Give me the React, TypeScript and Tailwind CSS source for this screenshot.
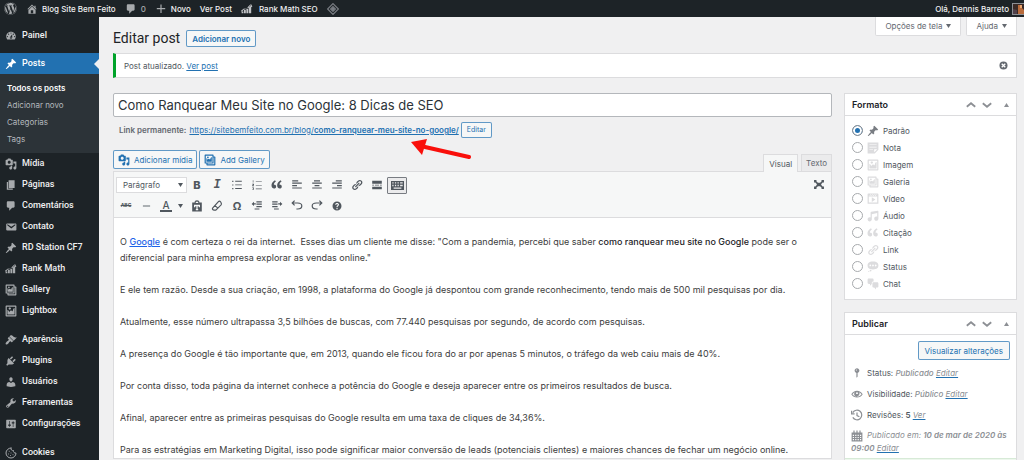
import type { ReactNode } from 'react';
import { FaWordpress } from 'react-icons/fa';
import { Cookie } from 'lucide-react';

const paths = {
  dashboard: 'M3.76 16h12.48c1.1-1.37 1.76-3.11 1.76-5 0-4.42-3.58-8-8-8s-8 3.58-8 8c0 1.89.66 3.63 1.76 5zM10 4c.55 0 1 .45 1 1s-.45 1-1 1-1-.45-1-1 .45-1 1-1zM6 6c.55 0 1 .45 1 1s-.45 1-1 1-1-.45-1-1 .45-1 1-1zm8 0c.55 0 1 .45 1 1s-.45 1-1 1-1-.45-1-1 .45-1 1-1zm-5.37 5.55L12 7v6c0 1.1-.9 2-2 2s-2-.9-2-2c0-.57.24-1.08.63-1.45zM4 10c.55 0 1 .45 1 1s-.45 1-1 1-1-.45-1-1 .45-1 1-1zm12 0c.55 0 1 .45 1 1s-.45 1-1 1-1-.45-1-1 .45-1 1-1zm-5 3c0-.55-.45-1-1-1s-1 .45-1 1 .45 1 1 1 1-.45 1-1z',
  post: 'M10.44 3.02l1.82-1.82 6.36 6.35-1.83 1.82c-1.05-.68-2.48-.57-3.41.36l-.75.75c-.92.93-1.04 2.35-.35 3.41l-1.83 1.82-2.41-2.41-2.8 2.79c-.42.42-3.38 2.71-3.8 2.29s1.86-3.39 2.28-3.81l2.79-2.79L4.1 9.36l1.83-1.82c1.05.69 2.48.57 3.4-.36l.75-.75c.93-.92 1.05-2.35.36-3.41z',
  media: 'M13 11V4c0-.55-.45-1-1-1h-1.67L9 1H5L3.67 3H2c-.55 0-1 .45-1 1v7c0 .55.45 1 1 1h10c.55 0 1-.45 1-1zM7 4.5c1.38 0 2.5 1.12 2.5 2.5S8.38 9.5 7 9.5 4.5 8.38 4.5 7 5.62 4.5 7 4.5zM14 6h5v10.5c0 1.38-1.12 2.5-2.5 2.5S14 17.88 14 16.5s1.12-2.5 2.5-2.5c.17 0 .34.02.5.05V9h-3V6zm-4 8.05V13h2v3.5c0 1.38-1.12 2.5-2.5 2.5S7 17.88 7 16.5 8.12 14 9.5 14c.17 0 .34.02.5.05z',
  page: 'M6 15V2h10v13H6zm-1 1h8v2H3V5h2v11z',
  comments: 'M5 2h9c1.1 0 2 .9 2 2v7c0 1.1-.9 2-2 2h-2l-5 5v-5H5c-1.1 0-2-.9-2-2V4c0-1.1.9-2 2-2z',
  email: 'M3.87 4h13.25C18.37 4 19 4.59 19 5.79v8.42c0 1.19-.63 1.79-1.88 1.79H3.87c-1.25 0-1.88-.6-1.88-1.79V5.79c0-1.2.63-1.79 1.88-1.79zm6.62 8.6l6.74-5.53c.24-.2.43-.66.13-1.07-.29-.41-.82-.42-1.17-.17l-5.7 3.86L4.8 5.83c-.35-.25-.88-.24-1.17.17-.3.41-.11.87.13 1.07z',
  rank: 'M1 14h3v3H1zM5 11l3-2v8H5zM9 9l3-2v10H9zM13 7l3-3 1-2 2 4-2 1v10h-4zM0 13L5 9l3 1 8-8 1 2-9 8-3-1-4 4z',
  appearance: 'M14.48 11.06L7.41 3.99l1.5-1.5c.5-.56 2.3-.47 3.51.32 1.21.8 1.43 1.28 2.91 2.1 1.18.64 2.45 1.26 4.45.85zm-.71.71L6.7 4.7 4.93 6.47c-.39.39-.39 1.02 0 1.41l1.06 1.06c.39.39.39 1.03 0 1.42-.6.6-1.43 1.11-2.21 1.69-.35.26-.7.53-1.01.84C1.43 14.23.4 16.08 1.4 17.07c.99 1 2.84-.03 4.18-1.36.31-.31.58-.66.85-1.02.57-.78 1.08-1.61 1.69-2.21.39-.39 1.02-.39 1.41 0l1.06 1.06c.39.39 1.02.39 1.41 0z',
  plugins: 'M13.11 4.36L9.87 7.6 8 5.73l3.24-3.24c.35-.34 1.05-.2 1.56.32.52.51.66 1.21.31 1.55zm-8 1.77l.91-1.12 9.01 9.01-1.19.84c-.71.71-2.63 1.16-3.82 1.16H6.14L4.9 17.26c-.59.59-1.54.59-2.12 0-.59-.58-.59-1.53 0-2.12l1.24-1.24v-3.88c0-1.13.4-3.19 1.09-3.89zm7.26 3.97l3.24-3.24c.34-.35 1.04-.21 1.55.31.52.51.66 1.21.31 1.55l-3.24 3.25z',
  users: 'M10 9.25c-2.27 0-2.73-3.44-2.73-3.44C7 4.02 7.82 2 9.97 2c2.16 0 2.98 2.02 2.71 3.81 0 0-.41 3.44-2.68 3.44zm0 2.57L12.72 10c2.39 0 4.52 2.33 4.52 4.53v2.49s-3.65 1.13-7.24 1.13c-3.65 0-7.24-1.13-7.24-1.13v-2.49c0-2.25 1.94-4.48 4.47-4.48z',
  tools: 'M16.68 9.77c-1.34 1.34-3.3 1.67-4.95.99l-5.41 6.52c-.99.99-2.59.99-3.58 0s-.99-2.59 0-3.57l6.52-5.42c-.68-1.65-.35-3.61.99-4.95 1.28-1.28 3.12-1.62 4.72-1.06l-2.89 2.89 2.82 2.82 2.86-2.87c.53 1.58.18 3.39-1.08 4.65zM3.81 16.21c.4.39 1.04.39 1.43 0 .4-.4.4-1.04 0-1.43-.39-.4-1.03-.4-1.43 0-.39.39-.39 1.03 0 1.43z',
  settings: 'M18 16V4c0-.55-.45-1-1-1H3c-.55 0-1 .45-1 1v12c0 .55.45 1 1 1h14c.55 0 1-.45 1-1zM8 11h1c.55 0 1 .45 1 1s-.45 1-1 1H8v1.5c0 .28-.22.5-.5.5s-.5-.22-.5-.5V13H6c-.55 0-1-.45-1-1s.45-1 1-1h1V5.5c0-.28.22-.5.5-.5s.5.22.5.5V11zm5-2h-1c-.55 0-1-.45-1-1s.45-1 1-1h1V5.5c0-.28.22-.5.5-.5s.5.22.5.5V7h1c.55 0 1 .45 1 1s-.45 1-1 1h-1v5.5c0 .28-.22.5-.5.5s-.5-.22-.5-.5V9z',
  home: 'M16 8.5l1.53 1.53-1.06 1.06L10 4.6l-6.47 6.49-1.06-1.06L10 2.5l4 4v-2h2v4zm-6-2.46l6 5.99V18H4v-5.97zM12 17v-5H8v5h4z',
  plus: 'M17 8.5v2h-6v6H9v-6H3v-2h6v-6h2v6z',
  image: 'M2.25 1h15.5c.69 0 1.25.56 1.25 1.25v15.5c0 .69-.56 1.25-1.25 1.25H2.25C1.56 19 1 18.44 1 17.75V2.25C1 1.56 1.56 1 2.25 1zM17 17V3H3v14h14zM10 6c0-1.1-.9-2-2-2s-2 .9-2 2 .9 2 2 2 2-.9 2-2zm3 5s0-6 3-6v10c0 .55-.45 1-1 1H5c-.55 0-1-.45-1-1V8c2 0 3 4 3 4s1-3 3-3 3 2 3 2z',
  gallery: 'M16 4h1.96c.57 0 1.04.47 1.04 1.04v12.92c0 .57-.47 1.04-1.04 1.04H5.04C4.47 19 4 18.53 4 17.96V16H2.04C1.47 16 1 15.53 1 14.96V2.04C1 1.47 1.47 1 2.04 1h12.92c.57 0 1.04.47 1.04 1.04V4zM3 14h11V3H3v11zm5-8.5C8 4.67 7.33 4 6.5 4S5 4.67 5 5.5 5.67 7 6.5 7 8 6.33 8 5.5zm2 4.5s1-5 3-5v8H4V7c2 0 2 3 2 3s.33-2 2-2 2 2 2 2zm7 7V6h-1v8.96c0 .57-.47 1.04-1.04 1.04H6v1h11z',
  aside: 'M1 1h18v12l-6 6H1V1zm3 3v1h12V4H4zm0 4v1h12V8H4zm6 5v-1H4v1h6zm2 4l5-5h-5v5z',
  video: 'M2 1h16c.55 0 1 .45 1 1v16l-18-.02V2c0-.55.45-1 1-1zm4 1L4 5h1l2-3H6zm4 0H9L7 5h1zm3 0h-1l-2 3h1zm3 0h-1l-2 3h1zm1 14V6H3v10h14zM8 7l6 4-6 4V7z',
  audio: 'M6.99 3.08l11.02-2c.55-.08.99.45.99 1V14.5c0 1.94-1.57 3.5-3.5 3.5S12 16.44 12 14.5c0-1.93 1.57-3.5 3.5-3.5.54 0 1.04.14 1.5.35V5.08l-9 2V16c-.24 1.7-1.74 3-3.5 3C2.57 19 1 17.44 1 15.5 1 13.57 2.57 12 4.5 12c.54 0 1.04.14 1.5.35V4.08c0-.55.44-.91.99-1z',
  quote: 'M8.54 12.74c0-.87-.24-1.61-.72-2.22-.73-.92-2.14-1.03-2.96-.85-.34-1.93 1.3-4.39 3.42-5.45L6.65 1.94C3.45 3.46.31 6.96.85 11.37 1.19 14.16 2.8 16 5.08 16c1 0 1.83-.29 2.48-.88.66-.59.98-1.38.98-2.38zm9.43 0c0-.87-.24-1.61-.72-2.22-.73-.92-2.14-1.03-2.96-.85-.34-1.93 1.3-4.39 3.42-5.45l-1.63-2.28c-3.2 1.52-6.34 5.02-5.8 9.43.34 2.79 1.95 4.63 4.23 4.63 1 0 1.83-.29 2.48-.88.66-.59.98-1.38.98-2.38z',
  link: 'M17.74 2.76c1.68 1.69 1.68 4.41 0 6.1l-1.53 1.52c-1.12 1.12-2.7 1.47-4.14 1.09l2.62-2.61.76-.77.76-.76c.84-.84.84-2.2 0-3.04-.84-.85-2.2-.85-3.04 0l-.77.76-3.38 3.38c-.37-1.44-.02-3.02 1.1-4.14l1.52-1.53c1.69-1.68 4.42-1.68 6.1 0zM8.59 13.43l5.34-5.34c.42-.42.42-1.1 0-1.52-.44-.43-1.13-.39-1.53 0l-5.33 5.34c-.42.42-.42 1.1 0 1.52.44.43 1.13.39 1.52 0zm-.76 2.29l4.14-4.15c.38 1.44.03 3.02-1.09 4.14l-1.52 1.53c-1.69 1.68-4.41 1.68-6.1 0-1.68-1.68-1.68-4.42 0-6.1l1.53-1.52c1.12-1.12 2.7-1.47 4.14-1.1l-4.14 4.15c-.85.84-.85 2.2 0 3.05.84.84 2.2.84 3.04 0z',
  status: 'M10 1c7 0 9 2.91 9 6.5S17 14 10 14s-9-2.91-9-6.5S3 1 10 1zM5.5 9C6.33 9 7 8.33 7 7.5S6.33 6 5.5 6 4 6.67 4 7.5 4.67 9 5.5 9zM10 9c.83 0 1.5-.67 1.5-1.5S10.83 6 10 6s-1.5.67-1.5 1.5S9.17 9 10 9zm4.5 0c.83 0 1.5-.67 1.5-1.5S15.33 6 14.5 6 13 6.67 13 7.5 13.67 9 14.5 9zM6 14.5c.83 0 1.5.67 1.5 1.5s-.67 1.5-1.5 1.5-1.5-.67-1.5-1.5.67-1.5 1.5-1.5zm-3 2c.55 0 1 .45 1 1s-.45 1-1 1-1-.45-1-1 .45-1 1-1z',
  chat: 'M11 6h-.82C9.07 6 8 7.2 8 8.16V10l-3 3v-3H3c-1.1 0-2-.9-2-2V3c0-1.1.9-2 2-2h6c1.1 0 2 .9 2 2v3zm0 1h6c1.1 0 2 .9 2 2v5c0 1.1-.9 2-2 2h-2v3l-3-3h-1c-1.1 0-2-.9-2-2V9c0-1.1.9-2 2-2z',
  pin: 'M14 6c0 1.86-1.28 3.41-3 3.86V16c0 1-2 2-2 2V9.860c-1.720-.45-3-2-3-3.860 0-2.210 1.790-4 4-4s4 1.790 4 4zM8 5c0 .55.45 1 1 1s1-.45 1-1-.45-1-1-1-1 .45-1 1z',
  eye: 'M10 4.500c4 0 7.300 2.200 9.500 6-2.200 3.600-5.500 5.500-9.500 5.500S2.700 14.100.5 10.500c2.200-3.800 5.500-6 9.500-6zM10 14.600c3.100 0 5.700-1.400 7.600-4.100-1-1.600-2.300-2.800-3.800-3.600a5 5 0 0 1-7.600 6.200 5 5 0 0 1 0-6.200c-1.500.8-2.800 2-3.800 3.600 1.900 2.700 4.500 4.100 7.600 4.100zM10 7a1.600 1.600 0 1 0 0 3.200A1.600 1.600 0 0 0 10 7z',
  calendar: 'M1 4h3V1h2v3h3V1h2v3h3V1h2v3h3v15H1zM3 8v2h2V8zM7 8v2h2V8zM11 8v2h2V8zM15 8v2h2V8zM3 11.500v2h2v-2zM7 11.500v2h2v-2zM11 11.500v2h2v-2zM15 11.500v2h2v-2zM3 15v2h2v-2zM7 15v2h2v-2zM11 15v2h2v-2zM15 15v2h2v-2z',
  ul: 'M2 3h2v2H2zM2 9h2v2H2zM2 15h2v2H2zM7 3h11v1.500H7zM7 9h11v1.500H7zM7 15h11v1.500H7z',
  ol: 'M3 2h1v4H3zM2 8h3v1.500L3.500 11H5v1H2v-1l1.500-2H2zM2 14h3v4H2v-1h2v-1H3v-1H2zM8 4h10v1H8zM8 10h10v1H8zM8 16h10v1H8z',
  left: 'M2 2h10v2H2zM2 6h16v2H2zM2 10h8v2H2zM2 14h16v2H2z',
  center: 'M5 2h10v2H5zM2 6h16v2H2zM6 10h8v2H6zM2 14h16v2H2z',
  right: 'M8 2h10v2H8zM2 6h16v2H2zM10 10h8v2h-8zM2 14h16v2H2z',
  more: 'M2 3h16v5H2zM2 9.500h3v1.500H2zM6.500 9.500h7V11h-7zM15 9.500h3V11h-3zM2 13h16v4H2z',
  kitchen: 'M0 3h20v14H0zM2 5v2h2V5zM6 5v2h2V5zM10 5v2h2V5zM14 5v2h4V5zM2 9v2h2V9zM6 9v2h2V9zM10 9v2h2V9zM14 9v2h4V9zM4 13v2h12v-2z',
  hr: 'M2 9h16v2H2z',
  paste: 'M2 4h4c0-2 1.500-3.500 4-3.500S14 2 14 4h4v15H2zM8 3v2h4V3zM5 8v4h2v-1.500h2V15H8v2h4v-2h-1v-4.500h2V12h2V8z',
  outdent: 'M9 2h9v2H9zM9 6h9v2H9zM9 10h9v2H9zM6 14h8v2H6zM1 6.500L5 3v2.500h3v2H5V10z',
  indent: 'M2 2h9v2H2zM2 6h9v2H2zM2 10h9v2H2zM5 14h8v2H5zM19 6.500L15 3v2.500h-3v2h3V10z',
  help: 'M10 1a9 9 0 1 1 0 18 9 9 0 0 1 0-18zM8.900 14v2.400h2.300V14zM6.300 7.300h2.300c0-2 3-2 3 0 0 1.500-2.600 1.700-2.600 4.200v1h2.100c0-2.300 2.900-2.500 2.900-5.400 0-4.300-7.700-4.300-7.700.2z',
  close: 'M10 1a9 9 0 1 1 0 18 9 9 0 0 1 0-18zM5 7l3 3-3 3 2 2 3-3 3 3 2-2-3-3 3-3-2-2-3 3-3-3z',
  fullscreen: 'M1 2h5L4.800 3.800 8 7h4l3.200-3.200L14 2h5v5l-1.800-1.200L14 9v2l3.200 3.200L19 13v5h-5l1.200-1.800L12 13H8l-3.200 3.200L6 18H1v-5l1.800 1.200L6 11V9L2.800 5.800 1 7z',
};

type IconName = keyof typeof paths;

const Icon = ({ name, className = 'size-3' }: { name: IconName; className?: string }) => (
  <svg viewBox="0 0 20 20" fill="currentColor" fillRule="evenodd" aria-hidden="true" className={`shrink-0 ${className}`}>
    <path d={paths[name]} />
  </svg>
);

const Stroke = ({ d, width = 2 }: { d: string; width?: number }) => (
  <svg viewBox="0 0 20 20" fill="none" stroke="currentColor" strokeWidth={width} aria-hidden="true" className="size-3 shrink-0">
    <path d={d} />
  </svg>
);

const Caret = ({ up = false }: { up?: boolean }) => (
  <svg viewBox="0 0 10 8" fill="currentColor" aria-hidden="true" className="h-1 w-[5px] shrink-0">
    <path d={up ? 'M5 0l5 8H0z' : 'M0 0h10L5 8z'} />
  </svg>
);

const menuTop: { icon: IconName; label: string }[] = [
  { icon: 'media', label: 'Mídia' },
  { icon: 'page', label: 'Páginas' },
  { icon: 'comments', label: 'Comentários' },
  { icon: 'email', label: 'Contato' },
  { icon: 'post', label: 'RD Station CF7' },
  { icon: 'rank', label: 'Rank Math' },
  { icon: 'gallery', label: 'Gallery' },
  { icon: 'image', label: 'Lightbox' },
];

const menuBottom: { icon: IconName; label: string }[] = [
  { icon: 'appearance', label: 'Aparência' },
  { icon: 'plugins', label: 'Plugins' },
  { icon: 'users', label: 'Usuários' },
  { icon: 'tools', label: 'Ferramentas' },
  { icon: 'settings', label: 'Configurações' },
];

const formats: { icon: IconName; label: string }[] = [
  { icon: 'post', label: 'Padrão' },
  { icon: 'aside', label: 'Nota' },
  { icon: 'image', label: 'Imagem' },
  { icon: 'gallery', label: 'Galeria' },
  { icon: 'video', label: 'Vídeo' },
  { icon: 'audio', label: 'Áudio' },
  { icon: 'quote', label: 'Citação' },
  { icon: 'link', label: 'Link' },
  { icon: 'status', label: 'Status' },
  { icon: 'chat', label: 'Chat' },
];

const MenuItem = ({ icon, label }: { icon: ReactNode; label: string }) => (
  <a href="#" className="flex h-[21px] items-center gap-[5px] pl-[5px] text-[9px] font-medium text-[#f0f0f1] font-[Roboto,sans-serif]">
    <span className="text-[#a7aaad]">{icon}</span>
    {label}
  </a>
);

const ToolButton = ({ label, active = false, children }: { label: string; active?: boolean; children: ReactNode }) => (
  <button
    type="button"
    aria-label={label}
    className={`flex h-[17px] w-5 items-center justify-center ${active ? 'rounded-[1px] border border-[#787c82] bg-[#ebebec]' : ''}`}
  >
    {children}
  </button>
);

const Panel = ({ title, children }: { title: string; children: ReactNode }) => (
  <section className="border border-[#dcdcde] bg-white">
    <header className="flex h-[22px] items-center border-b border-[#dcdcde] px-[7px]">
      <h2 className="flex-1 text-[9px] font-semibold text-[#1d2327]">{title}</h2>
      <div className="flex items-center gap-1 text-[#8c8f94]">
        <button type="button" aria-label="Mover para cima"><Stroke d="M3 13l7-6 7 6" width={3} /></button>
        <button type="button" aria-label="Mover para baixo"><Stroke d="M3 7l7 6 7-6" width={3} /></button>
        <button type="button" aria-label="Alternar painel" className="pl-[7px]"><Caret up /></button>
      </div>
    </header>
    {children}
  </section>
);

const AdminBar = () => (
  <header className="flex h-[17px] shrink-0 items-center bg-[#1d2327] pl-1 text-[8px] font-medium text-[#f0f0f1]">
    <a href="#" aria-label="WordPress" className="text-[#a7aaad]"><FaWordpress className="size-[13px]" /></a>
    <a href="#" className="ml-[9px] flex items-center gap-1"><Icon name="home" className="size-3 text-[#a7aaad]" />Blog Site Bem Feito</a>
    <a href="#" className="ml-[9px] flex items-center gap-1 text-[#a7aaad]"><Icon name="comments" />0</a>
    <a href="#" className="ml-[9px] flex items-center gap-1"><Icon name="plus" className="size-3 text-[#a7aaad]" />Novo</a>
    <a href="#" className="ml-[9px]">Ver Post</a>
    <a href="#" className="ml-[9px] flex items-center gap-[6px]"><Icon name="rank" className="size-3 text-[#c3c4c7]" />Rank Math SEO</a>
    <a href="#" aria-label="Cache" className="ml-[9px] text-[#787c82]">
      <svg viewBox="0 0 20 20" fill="none" stroke="currentColor" strokeWidth="2" className="size-3">
        <path d="M10 1l9 9-9 9-9-9zM10 6l4 4-4 4-4-4z" />
        <path d="M10 8l2 2-2 2-2-2z" fill="currentColor" />
      </svg>
    </a>
    <a href="#" className="ml-auto flex items-center gap-[3px]">
      Olá, Dennis Barreto
      <svg viewBox="0 0 12 12" className="size-3" aria-hidden="true">
        <rect width="12" height="12" fill="#8c8f94" />
        <rect x="1" y="1" width="11" height="10" fill="#3a2a26" />
        <path d="M6 2h4v3l2 2v4H6z" fill="#b86b3c" />
        <path d="M1 6l4 1v4H1z" fill="#50404a" />
        <path d="M8 2h2v3H8z" fill="#e8a56f" />
      </svg>
    </a>
  </header>
);

const Sidebar = () => (
  <nav className="w-[99px] shrink-0 bg-[#1d2327] pt-2">
    <MenuItem icon={<Icon name="dashboard" />} label="Painel" />
    <a href="#" className="relative mt-[7px] flex h-[21px] items-center gap-[5px] bg-[#2271b1] pl-[5px] text-[9px] font-medium text-white font-[Roboto,sans-serif]">
      <Icon name="post" />
      Posts
      <svg viewBox="0 0 5 10" className="absolute right-0 h-[10px] w-[5px]" aria-hidden="true"><path d="M5 0v10L0 5z" fill="#f0f0f1" /></svg>
    </a>
    <ul className="bg-[#2c3338] pt-[6px] pb-[5px] pl-[7px] text-[8px] leading-[17px] text-[#b4b9be]">
      <li><a href="#" className="font-semibold text-white">Todos os posts</a></li>
      <li><a href="#">Adicionar novo</a></li>
      <li><a href="#">Categorias</a></li>
      <li><a href="#">Tags</a></li>
    </ul>
    {menuTop.map(item => <MenuItem key={item.label} icon={<Icon name={item.icon} />} label={item.label} />)}
    <div className="h-2" />
    {menuBottom.map(item => <MenuItem key={item.label} icon={<Icon name={item.icon} />} label={item.label} />)}
    <div className="h-2" />
    <MenuItem icon={<Cookie className="size-3" />} label="Cookies" />
  </nav>
);

const outlineButton = 'flex items-center justify-center rounded-[2px] border border-[#2271b1]/70 bg-[#f6f7f7] text-[#2271b1]';

const Toolbar = () => (
  <div className="flex items-start justify-between border-b border-[#dcdcde] bg-[#f6f7f7] px-[2px] pt-1 pb-[2px] text-[#50575e]">
    <div>
      <div className="flex h-[18px] items-center">
        <div className="relative flex items-center">
          <select aria-label="Formato do texto" className="h-4 w-[71px] appearance-none border border-[#dcdcde] bg-white pl-[6px] text-[8px] text-[#50575e]">
            <option>Parágrafo</option>
          </select>
          <span className="pointer-events-none absolute right-1"><Caret /></span>
        </div>
        <ToolButton label="Negrito"><span className="text-[11px] font-extrabold">B</span></ToolButton>
        <ToolButton label="Itálico"><span className="text-[12px] font-bold italic font-['Liberation_Mono',monospace]">I</span></ToolButton>
        <ToolButton label="Lista com marcadores"><Icon name="ul" /></ToolButton>
        <ToolButton label="Lista numerada"><Icon name="ol" /></ToolButton>
        <ToolButton label="Citação"><Icon name="quote" /></ToolButton>
        <ToolButton label="Alinhar à esquerda"><Icon name="left" /></ToolButton>
        <ToolButton label="Centralizar"><Icon name="center" /></ToolButton>
        <ToolButton label="Alinhar à direita"><Icon name="right" /></ToolButton>
        <ToolButton label="Inserir link"><Icon name="link" /></ToolButton>
        <ToolButton label="Leia mais"><Icon name="more" /></ToolButton>
        <ToolButton label="Alternar barra" active><Icon name="kitchen" className="size-[13px]" /></ToolButton>
      </div>
      <div className="mt-[3px] flex h-[18px] items-center">
        <ToolButton label="Tachado"><span className="text-[5px] font-bold line-through">ABC</span></ToolButton>
        <ToolButton label="Linha horizontal"><Icon name="hr" className="h-3 w-[9px]" /></ToolButton>
        <button type="button" aria-label="Cor do texto" className="flex w-[31px] items-center justify-center gap-[6px]">
          <span className="w-3 border-b-2 border-[#50575e] text-center text-[10px] leading-[10px] font-medium">A</span>
          <Caret />
        </button>
        <ToolButton label="Colar como texto"><Icon name="paste" /></ToolButton>
        <ToolButton label="Limpar formatação"><Stroke d="M3 13L12 3q2-2 4 0t1 5L8 17H5q-4-1-2-4zM6 9l6 5" /></ToolButton>
        <ToolButton label="Caractere especial"><span className="text-[11px] font-bold">Ω</span></ToolButton>
        <ToolButton label="Diminuir recuo"><Icon name="outdent" /></ToolButton>
        <ToolButton label="Aumentar recuo"><Icon name="indent" /></ToolButton>
        <ToolButton label="Desfazer"><Stroke d="M6 1L2 5l4 4M2 5h9q7 0 7 5t-7 5H9" /></ToolButton>
        <ToolButton label="Refazer"><Stroke d="M14 1l4 4-4 4M18 5H9Q2 5 2 10t7 5h2" /></ToolButton>
        <ToolButton label="Ajuda do editor"><Icon name="help" className="size-[10px]" /></ToolButton>
      </div>
    </div>
    <button type="button" aria-label="Tela cheia" className="pt-[3px] pr-1"><Icon name="fullscreen" className="h-[11px] w-3" /></button>
  </div>
);

const Editor = () => (
  <div className="min-w-0 flex-1">
    <input
      aria-label="Título"
      defaultValue="Como Ranquear Meu Site no Google: 8 Dicas de SEO"
      className="block h-6 w-full rounded-[2px] border border-[#b4b7bb] bg-white px-1 text-[13px] text-[#2c3338]"
    />
    <div className="relative mt-[5px] flex items-center pl-[6px] text-[8px] text-[#646970]">
      <span className="mr-[3px] font-semibold">Link permanente:</span>
      <a href="#" className="text-[#2271b1] underline">https://sitebemfeito.com.br/blog/<b className="font-semibold">como-ranquear-meu-site-no-google/</b></a>
      <button type="button" className={`${outlineButton} ml-[2px] h-4 px-[5px] text-[7px]`}>Editar</button>
      <svg viewBox="0 0 62 20" className="absolute top-[17px] left-[298px] h-5 w-[62px]" aria-hidden="true">
        <path d="M14 8l44 10" stroke="#f90f0b" strokeWidth="4" strokeLinecap="round" />
        <path d="M0 3L16 0 11 16z" fill="#f90f0b" />
      </svg>
    </div>
    <div className="mt-3 flex items-end">
      <div className="mb-[2px] flex gap-[2px] text-[8px]">
        <button type="button" className={`${outlineButton} h-[19px] gap-1 px-1`}><Icon name="media" />Adicionar mídia</button>
        <button type="button" className={`${outlineButton} h-[19px] gap-1 px-1`}><Icon name="gallery" />Add Gallery</button>
      </div>
      <div className="ml-auto flex gap-[3px] text-[8px] text-[#50575e]">
        <button type="button" className="relative -mb-px h-[18px] border border-b-0 border-[#dcdcde] bg-[#f6f7f7] px-[5px]">Visual</button>
        <button type="button" className="h-[17px] border border-b-0 border-[#dcdcde] bg-[#ebebec] px-1 text-[#646970]">Texto</button>
      </div>
    </div>
    <div className="border border-[#dcdcde] bg-white">
      <Toolbar />
      <article className="space-y-4 px-[6px] pt-4 text-[9px] leading-4 text-[#3c3c3c]">
        <p>
          O <a href="#" className="font-medium text-[#1c63e8] underline">Google</a> é com certeza o rei da internet.&nbsp; Esses dias um cliente me disse: "Com a pandemia, percebi que saber <strong className="font-medium text-[#1d2327]">como ranquear meu site no Google</strong> pode ser o diferencial para minha empresa explorar as vendas online."
        </p>
        <p>E ele tem razão. Desde a sua criação, em 1998, a plataforma do Google já despontou com grande reconhecimento, tendo mais de 500 mil pesquisas por dia.</p>
        <p>Atualmente, esse número ultrapassa 3,5 bilhões de buscas, com 77.440 pesquisas por segundo, de acordo com pesquisas.</p>
        <p>A presença do Google é tão importante que, em 2013, quando ele ficou fora do ar por apenas 5 minutos, o tráfego da web caiu mais de 40%.</p>
        <p>Por conta disso, toda página da internet conhece a potência do Google e deseja aparecer entre os primeiros resultados de busca.</p>
        <p>Afinal, aparecer entre as primeiras pesquisas do Google resulta em uma taxa de cliques de 34,36%.</p>
        <p>Para as estratégias em Marketing Digital, isso pode significar maior conversão de leads (potenciais clientes) e maiores chances de fechar um negócio online.</p>
      </article>
    </div>
  </div>
);

const FormatPanel = () => (
  <Panel title="Formato">
    <div role="radiogroup" aria-label="Formato do post" className="px-[7px] pt-[6px] pb-[7px]">
      {formats.map((format, i) => (
        <label key={format.label} className="flex h-[17px] items-center text-[8px] text-[#50575e]">
          <input
            type="radio"
            name="format"
            defaultChecked={i === 0}
            className="size-[11px] appearance-none rounded-full border border-[#a7aaad] bg-white checked:border-[#8c8f94] checked:bg-[#2271b1] checked:shadow-[inset_0_0_0_2px_#fff]"
          />
          <Icon name={format.icon} className={`mr-1 ml-1 size-3 ${i === 0 ? 'text-[#787c82]' : 'text-[#dcdcde]'}`} />
          {format.label}
        </label>
      ))}
    </div>
  </Panel>
);

const EditLink = ({ children }: { children: ReactNode }) => (
  <a href="#" className="font-normal text-[#8c8f94] italic underline decoration-[#2271b1]">{children}</a>
);

const PublishPanel = () => (
  <Panel title="Publicar">
    <div className="px-[6px] pt-[6px] text-[8px] text-[#50575e]">
      <button type="button" className={`${outlineButton} ml-auto h-[19px] px-[6px]`}>Visualizar alterações</button>
      <div className="mt-[2px] flex h-[21px] items-center gap-1">
        <Icon name="pin" className="size-3 text-[#8c8f94]" />
        <span>Status: <em className="font-medium text-[#8c8f94]">Publicado</em> <EditLink>Editar</EditLink></span>
      </div>
      <div className="flex h-[21px] items-center gap-1">
        <Icon name="eye" className="size-3 text-[#8c8f94]" />
        <span>Visibilidade: <em className="font-medium text-[#8c8f94]">Público</em> <EditLink>Editar</EditLink></span>
      </div>
      <div className="flex h-[21px] items-center gap-1">
        <span className="text-[#8c8f94]"><Stroke d="M3 6a8 8 0 1 1 0 8M1 3v5h5M10 6v5l4 2" /></span>
        <span>Revisões: <b className="font-semibold">5</b> <EditLink>Ver</EditLink></span>
      </div>
      <p className="pt-1 pb-[3px] leading-[13px] text-[#8c8f94] italic">
        <Icon name="calendar" className="mr-1 inline-block size-3 align-middle" />
        Publicado em: <b className="font-semibold">10 de mar de 2020 às 09:00</b> <EditLink>Editar</EditLink>
      </p>
    </div>
    <div className="h-8 border-t border-[#d7ead7] bg-[#edf7ed]" />
  </Panel>
);

export default function App() {
  return (
    <div className="flex h-screen flex-col overflow-hidden bg-[#f0f0f1] font-[Inter,sans-serif]">
      <AdminBar />
      <div className="flex min-h-0 flex-1">
        <Sidebar />
        <main className="min-w-0 flex-1 pr-[7px] pl-[14px]">
          <div className="flex h-9 items-start">
            <h1 className="pt-[11px] text-[14px] leading-5 text-[#1d2327] font-[Roboto,sans-serif]">Editar post</h1>
            <a href="#" className={`${outlineButton} mt-[13px] ml-[6px] h-[17px] px-[5px] text-[8px] font-semibold`}>Adicionar novo</a>
            <div className="ml-auto flex gap-[5px] text-[8px] text-[#646970]">
              <button type="button" className="flex h-[19px] items-center gap-1 rounded-b-[2px] border border-t-0 border-[#dcdcde] bg-white px-[9px]">Opções de tela <Caret /></button>
              <button type="button" className="flex h-[19px] items-center gap-1 rounded-b-[2px] border border-t-0 border-[#dcdcde] bg-white px-[9px]">Ajuda <Caret /></button>
            </div>
          </div>
          <div className="flex h-[25px] items-center justify-between border border-l-[3px] border-[#dcdcde] border-l-[#00a32a] bg-white pr-2 pl-2 text-[8px] text-[#50575e]">
            <p>Post atualizado. <a href="#" className="text-[#2271b1] underline">Ver post</a></p>
            <button type="button" aria-label="Dispensar aviso" className="text-[#646970]"><Icon name="close" className="size-[9px]" /></button>
          </div>
          <div className="mt-[15px] flex items-start gap-3">
            <Editor />
            <aside className="w-[173px] shrink-0 space-y-3">
              <FormatPanel />
              <PublishPanel />
            </aside>
          </div>
        </main>
      </div>
    </div>
  );
}
